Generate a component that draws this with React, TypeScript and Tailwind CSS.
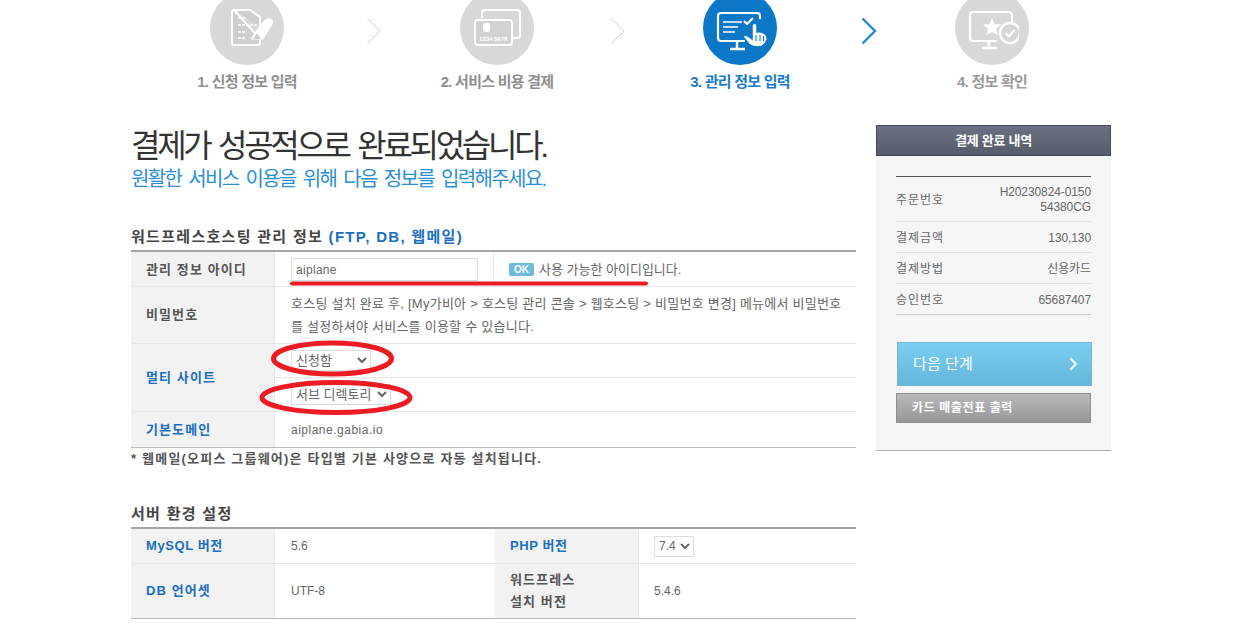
import type { ReactNode } from "react";

const FONT = "font-['Liberation_Sans','Noto_Sans_CJK_KR',sans-serif]";

function Chevron({ active }: { active?: boolean }) {
  return (
    <svg width="16" height="28" viewBox="0 0 16 28" fill="none">
      <path
        d="M1.5 1.5 L14 14 L1.5 26.5"
        stroke={active ? "#2288d8" : "#cfcfcf"}
        strokeWidth={active ? 2.4 : 1}
      />
    </svg>
  );
}

function FormIcon() {
  return (
    <svg width="54" height="40" viewBox="0 0 54 40" fill="none" stroke="#fff" strokeLinejoin="round">
      <path d="M14 2 H30 L40 9 V19 M40 31 V35 Q40 37 38 37 H14 Q12 37 12 35 V4 Q12 2 14 2 Z" strokeWidth="2" fill="#cfcfcf" />
      <path d="M18 10 h3 m1 0 h3 M18 17 h3 m1 0 h3 m1 0 h3 m1 0 h3 m1 0 h3 M18 24 h3 m1 0 h3 M18 30 h3 m1 0 h3" strokeWidth="1.3" />
      <path d="M37 22 L45 12 Q49 9 52 12 Q54 15 51 18 L43 31 H31 Z" fill="#fff" stroke="#fff" strokeWidth="1" />
      <path d="M33 31 L37 25 L41 31 Z" fill="#cfcfcf" stroke="none" />
    </svg>
  );
}

function CardIcon() {
  return (
    <svg width="48" height="38" viewBox="0 0 48 38" fill="none" stroke="#fff" strokeWidth="2">
      <path d="M9 9 V4 Q9 1 12 1 H44 Q47 1 47 4 V26 Q47 29 44 29 H40" />
      <rect x="2" y="11" width="37" height="25" rx="3" fill="#d2d2d2" />
      <rect x="10" y="14" width="7" height="9" rx="2" fill="#fff" stroke="none" />
      <text x="6" y="32" fill="#fff" stroke="none" fontSize="6" fontWeight="700">
        1234 5678
      </text>
    </svg>
  );
}

function ManageIcon() {
  return (
    <svg className="overflow-visible" width="50" height="50" viewBox="0 0 50 50" fill="none" stroke="#fff" strokeWidth="2.2">
      <path d="M30 38 H6 Q3 38 3 35 V13 Q3 10 6 10 H42 Q45 10 45 13 V16" />
      <path d="M22 38 V45 M15 46 H30" strokeWidth="2.4" />
      <path d="M8 19 H27 M8 24 H23 M8 29 H20" strokeWidth="1.6" />
      <path d="M29 18 L32 21 L38 15" strokeWidth="2" />
      <path d="M37 22 Q39.5 18 42 22 V29 Q47 28 50 31 Q53 33 52 37 Q50 44 43 44 Q37 44 34 41 L28 34 Q29 31 33 33 L37 36 Z" fill="#fff" stroke="#0a78c6" strokeWidth="1.5" />
      <path d="M41 32 V38 M45 32 V38 M48.5 33 V38" stroke="#0a78c6" strokeWidth="1" />
    </svg>
  );
}

function ConfirmIcon() {
  return (
    <svg width="54" height="50" viewBox="0 0 54 50" fill="none" stroke="#fff" strokeWidth="2.2">
      <path d="M32 38 H8 Q5 38 5 35 V12 Q5 9 8 9 H44 Q47 9 47 12 V20" />
      <path d="M24 38 V44 M17 45 H32" strokeWidth="2.4" />
      <path d="M27 15 L29.5 21 L36 21.5 L31 26 L33 32 L27 29 L21 32 L23 26 L18 21.5 L24.5 21 Z" fill="#fff" stroke="none" />
      <circle cx="45" cy="30" r="10" fill="#d6d6d6" strokeWidth="2.4" />
      <path d="M40.5 30 L44 33.5 L49.5 27" strokeWidth="2" />
    </svg>
  );
}

function Step({
  icon,
  label,
  active,
  dim,
}: {
  icon: ReactNode;
  label: string;
  active?: boolean;
  dim?: boolean;
}) {
  return (
    <div className="flex w-[150px] flex-col items-center">
      <div
        className={`flex h-[74px] w-[74px] items-center justify-center rounded-full ${
          active ? "bg-[#0a78c6]" : "bg-[#d8d8d8]"
        }`}
      >
        {icon}
      </div>
      <div
        className={`mt-[7px] h-[20px] text-[15px] leading-[20px] font-bold tracking-[-0.75px] ${
          active ? "text-[#1a7acb]" : dim ? "text-[#9a9a9a]" : "text-[#8f8f8f]"
        }`}
      >
        {label}
      </div>
    </div>
  );
}

function HeadCell({ children, blue, className }: { children: ReactNode; blue?: boolean; className?: string }) {
  return (
    <div
      className={`flex w-[144px] shrink-0 items-center border-r border-[#e6e6e6] bg-[#f2f2f2] pl-[15px] text-[13px] font-bold tracking-[1.1px] ${
        blue ? "text-[#1a6fc0]" : "text-[#555]"
      } ${className ?? ""}`}
    >
      <div>{children}</div>
    </div>
  );
}

function SideRow({ label, value, h }: { label: string; value: ReactNode; h: string }) {
  return (
    <div className={`flex items-center justify-between border-b border-[#e2e2e2] pt-[2px] text-[12px] text-[#666] ${h}`}>
      <span className="tracking-[1px]">{label}</span>
      <span className="text-right leading-[15px] tracking-[-0.1px]">{value}</span>
    </div>
  );
}

export default function App() {
  return (
    <div className={`relative h-[626px] w-[1258px] overflow-hidden bg-white ${FONT}`}>
      <div className="ml-[131px] w-[980px]">
        {/* steps */}
        <div className="-mt-[9px] ml-[41px] flex items-start">
          <Step icon={<FormIcon />} label="1. 신청 정보 입력" />
          <div className="flex h-[74px] w-[100px] items-center justify-center pt-[6px] pl-[3px]">
            <Chevron />
          </div>
          <Step icon={<CardIcon />} label="2. 서비스 비용 결제" />
          <div className="flex h-[74px] w-[93px] items-center justify-center pt-[6px] pr-[2px]">
            <Chevron />
          </div>
          <Step icon={<ManageIcon />} label="3. 관리 정보 입력" active />
          <div className="flex h-[74px] w-[102px] items-center justify-center pt-[6px] pl-[6px]">
            <Chevron active />
          </div>
          <Step icon={<ConfirmIcon />} label="4. 정보 확인" dim />
        </div>

        <div className="mt-[33px] flex items-start gap-[20px]">
          {/* main column */}
          <div className="w-[725px] pt-[3px]">
            <h1 className="h-[36px] text-[32px] leading-[36px] font-normal tracking-[-3.3px] [word-spacing:3px] whitespace-nowrap text-[#333]">
              결제가 성공적으로 완료되었습니다.
            </h1>
            <p className="h-[30px] text-[20px] leading-[30px] tracking-[-1.63px] [word-spacing:3px] whitespace-nowrap text-[#2a8fd8]">
              원활한 서비스 이용을 위해 다음 정보를 입력해주세요.
            </p>

            <h2 className="mt-[33px] h-[20px] text-[15px] leading-[20px] font-bold tracking-[1.3px] text-[#444]">
              워드프레스호스팅 관리 정보 <span className="text-[#1a6fc0]">(FTP, DB, 웹메일)</span>
            </h2>
            <div className="mt-[3px] border-t-2 border-b border-t-[#a5a5a5] border-b-[#bbb] text-[13px] text-[#666]">
              <div className="flex h-[35px] border-b border-[#e6e6e6]">
                <HeadCell className="pt-[1px]">관리 정보 아이디</HeadCell>
                <div className="flex w-[219px] items-center border-r border-[#e6e6e6] pt-[1px] pl-[16px]">
                  <input
                    defaultValue="aiplane"
                    className="h-[23px] w-[187px] border border-[#ddd] px-[4px] text-[12px] tracking-[0.3px] text-[#666] outline-none"
                  />
                </div>
                <div className="flex items-center pt-[1px] pl-[15px]">
                  <span className="mr-[5px] flex h-[13px] w-[25px] items-center justify-center rounded-[2px] bg-[#6ebbdc] text-[10px] font-bold text-white">
                    OK
                  </span>
                  사용 가능한 아이디입니다.
                </div>
              </div>
              <div className="flex h-[57px] border-b border-[#e6e6e6]">
                <HeadCell>비밀번호</HeadCell>
                <div className="flex items-center pl-[16px] leading-[23px] tracking-[0.25px] whitespace-nowrap">
                  <p>
                    호스팅 설치 완료 후, [My가비아 &gt; 호스팅 관리 콘솔 &gt; 웹호스팅 &gt; 비밀번호 변경] 메뉴에서 비밀번호
                    <br />를 설정하셔야 서비스를 이용할 수 있습니다.
                  </p>
                </div>
              </div>
              <div className="flex h-[68px] border-b border-[#e6e6e6]">
                <HeadCell blue>멀티 사이트</HeadCell>
                <div className="flex grow flex-col">
                  <div className="flex h-[34px] items-center border-b border-[#e6e6e6] pl-[16px]">
                    <select defaultValue="신청함" className="h-[21px] w-[80px] border border-[#ddd] bg-white text-[13px] text-[#666]">
                      <option>신청함</option>
                    </select>
                  </div>
                  <div className="flex grow items-center pl-[16px]">
                    <select defaultValue="서브 디렉토리" className="h-[21px] w-[100px] border border-[#ddd] bg-white text-[13px] text-[#666]">
                      <option>서브 디렉토리</option>
                    </select>
                  </div>
                </div>
              </div>
              <div className="flex h-[35px]">
                <HeadCell blue>기본도메인</HeadCell>
                <div className="flex items-center pl-[16px] text-[12px] tracking-[0.5px]">aiplane.gabia.io</div>
              </div>
            </div>
            <p className="mt-[3px] h-[16px] text-[13px] leading-[16px] font-bold tracking-[1.2px] text-[#555]">
              * 웹메일(오피스 그룹웨어)은 타입별 기본 사양으로 자동 설치됩니다.
            </p>

            <h2 className="mt-[37px] h-[20px] text-[15px] leading-[20px] font-bold tracking-[1.3px] text-[#444]">
              서버 환경 설정
            </h2>
            <div className="mt-[3px] border-t-2 border-b border-t-[#a5a5a5] border-b-[#bbb] text-[12px] text-[#666]">
              <div className="flex h-[35px] border-b border-[#e6e6e6]">
                <HeadCell blue>
                  <span className="tracking-[0.6px]">MySQL 버전</span>
                </HeadCell>
                <div className="flex w-[220px] items-center pl-[16px]">5.6</div>
                <HeadCell blue>
                  <span className="tracking-[0.6px]">PHP 버전</span>
                </HeadCell>
                <div className="flex items-center pl-[15px]">
                  <select defaultValue="7.4" className="h-[21px] w-[40px] border border-[#ddd] bg-white text-[12px] text-[#666]">
                    <option>7.4</option>
                  </select>
                </div>
              </div>
              <div className="flex h-[54px]">
                <HeadCell blue>DB 언어셋</HeadCell>
                <div className="flex w-[220px] items-center pl-[16px]">UTF-8</div>
                <HeadCell className="leading-[22px]">
                  워드프레스
                  <br />
                  설치 버전
                </HeadCell>
                <div className="flex items-center pl-[15px]">5.4.6</div>
              </div>
            </div>
          </div>

          {/* sidebar */}
          <aside className="w-[235px]">
            <div className="flex h-[31px] items-center justify-center border border-[#44495a] bg-gradient-to-b from-[#6b7182] to-[#565c6c] text-[13px] font-bold tracking-[-0.3px] text-white">
              결제 완료 내역
            </div>
            <div className="h-[295px] border-b border-[#b0b0b0] bg-[#f6f6f6] px-[20px] pt-[20px]">
              <div className="border-t border-[#555]">
                <SideRow
                  h="h-[45px]"
                  label="주문번호"
                  value={
                    <>
                      H20230824-0150
                      <br />
                      54380CG
                    </>
                  }
                />
                <SideRow h="h-[31px]" label="결제금액" value="130,130" />
                <SideRow h="h-[31px]" label="결제방법" value="신용카드" />
                <div className="border-b border-[#ccc]">
                  <SideRow h="h-[30px] border-b-0" label="승인번호" value="65687407" />
                </div>
              </div>
              <button className="mt-[27px] ml-[1px] flex h-[44px] w-[195px] items-center justify-between border border-[#6db9dc] bg-gradient-to-b from-[#7bcdf1] to-[#64b6db] pr-[13px] pl-[15px] text-[15px] tracking-[0.1px] text-white">
                다음 단계
                <svg width="9" height="14" viewBox="0 0 9 14" fill="none">
                  <path d="M1.5 1.5 L7 7 L1.5 12.5" stroke="#fff" strokeWidth="2" />
                </svg>
              </button>
              <button className="mt-[7px] flex h-[30px] w-[195px] items-center border border-[#8f8f93] bg-gradient-to-b from-[#b9b9bb] to-[#97979b] pl-[15px] text-[12px] font-bold tracking-[0.6px] text-white">
                카드 매출전표 출력
              </button>
            </div>
          </aside>
        </div>
      </div>

      {/* red marker annotations */}
      <svg className="absolute top-0 left-0" width="1258" height="626" fill="none" stroke="#ed1c24">
        <path d="M292 283.5 H646" strokeWidth="4" strokeLinecap="round" />
        <ellipse cx="332.5" cy="358.5" rx="59" ry="15.5" strokeWidth="5" />
        <ellipse cx="336" cy="397.5" rx="74" ry="15" strokeWidth="5" />
      </svg>
    </div>
  );
}
